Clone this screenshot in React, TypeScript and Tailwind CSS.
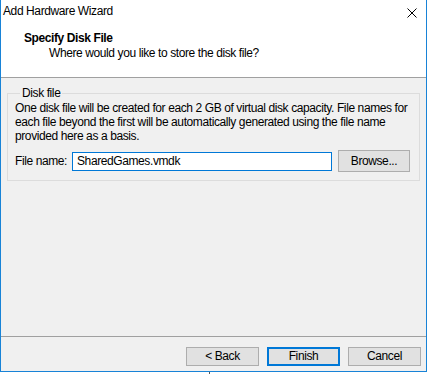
export default function App() {
  return (
    <div className="w-[429px] h-[374px] bg-white font-['Liberation_Sans',Arial,sans-serif] text-[12px] leading-[15px] text-black tracking-[-0.4px]">
      <div className="w-[427px] h-[372px] border-x border-b border-[#1883d7] flex flex-col bg-[#f0f0f0]">
        {/* Header */}
        <div className="h-[78px] shrink-0 bg-white border-b border-[#a0a0a0] flex flex-col">
          <div className="flex justify-between items-start pt-[4px] pl-[2px] pr-[9px]">
            <span>Add Hardware Wizard</span>
            <svg width="10" height="10" viewBox="0 0 10 10" className="mt-[4px]">
              <path d="M0.5 0.5 L9.5 9.5 M9.5 0.5 L0.5 9.5" stroke="#000" strokeWidth="1" fill="none" />
            </svg>
          </div>
          <div className="pl-[23px] mt-[12px] font-bold">Specify Disk File</div>
          <div className="pl-[48px]">Where would you like to store the disk file?</div>
        </div>

        {/* Body */}
        <div className="h-[258px] shrink-0 px-[6px] pt-[8px]">
          <fieldset className="border border-[#dcdcdc] pl-[7px] pr-[8px] pb-[8px]">
            <legend className="ml-[5px] px-[2px] leading-[15px]">Disk file</legend>
            <p className="leading-[14px]">
              One disk file will be created for each 2 GB of virtual disk capacity. File names for each file beyond the first will be automatically generated using the file name provided here as a basis.
            </p>
            <div className="flex items-center mt-[7px]">
              <span className="w-[57px] shrink-0">File name:</span>
              <div className="w-[260px] h-[19px] shrink-0 border border-[#0078d7] bg-white pl-[4px] flex items-center">
                SharedGames.vmdk
              </div>
              <button className="ml-[6px] w-[72px] h-[22px] shrink-0 border border-[#adadad] bg-[#e1e1e1] flex items-center justify-center">
                Browse...
              </button>
            </div>
          </fieldset>
        </div>

        {/* Footer */}
        <div className="flex-1 border-t border-[#a0a0a0] flex justify-end items-start gap-[8px] pt-[10px] pr-[5px]">
          <button className="w-[73px] h-[19px] border border-[#adadad] bg-[#e1e1e1] flex items-center justify-center">
            &lt; Back
          </button>
          <button className="w-[73px] h-[19px] border-2 border-[#0078d7] bg-[#e1e1e1] flex items-center justify-center">
            Finish
          </button>
          <button className="w-[73px] h-[19px] border border-[#adadad] bg-[#e1e1e1] flex items-center justify-center">
            Cancel
          </button>
        </div>
      </div>
      <div className="ml-[209px] w-[1px] h-[2px] bg-[#555]" />
    </div>
  );
}
